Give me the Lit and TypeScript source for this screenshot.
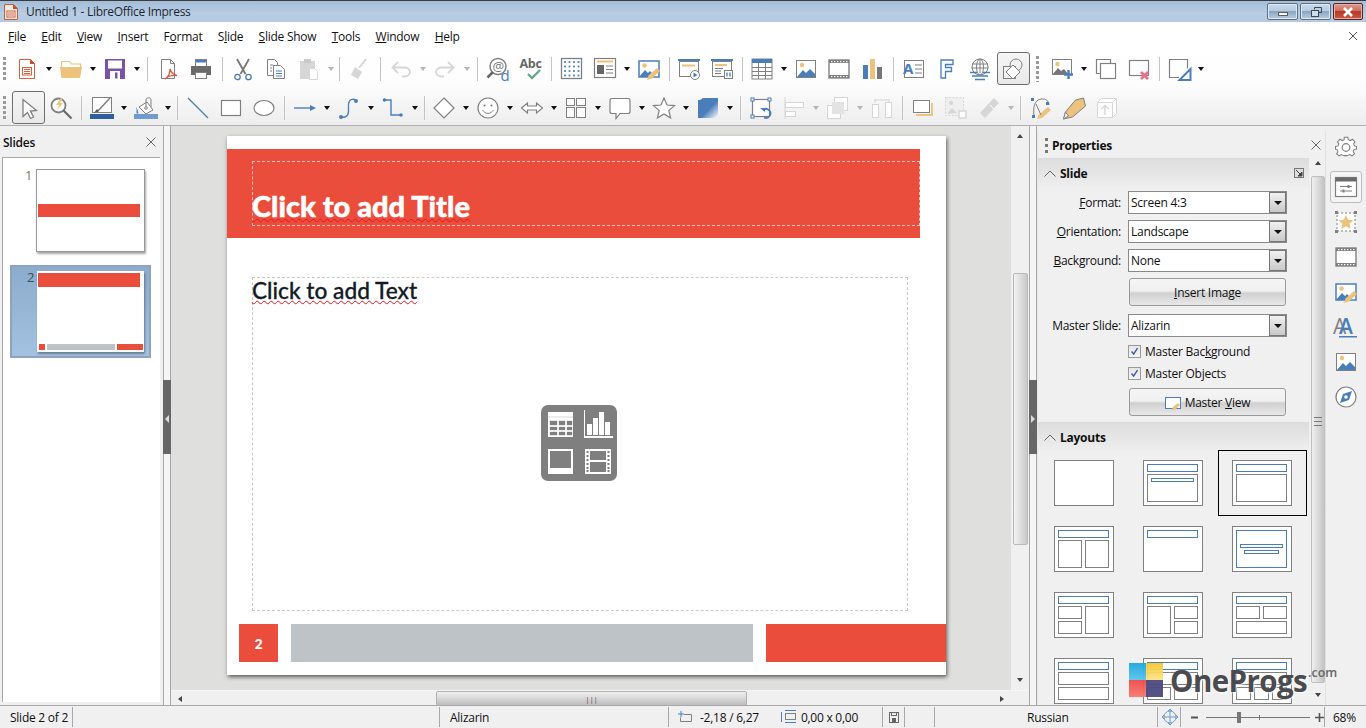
import { LitElement, html, css, svg } from "lit";
import { customElement } from "lit/decorators.js";

const G = "#808080", B = "#4a7ebb", O = "#ecc27c", D = "#d6d6d6", R = "#e0533c";

const dots = (xs: number[], ys: number[], c: string, r = 0.9) =>
  xs.flatMap((x) => ys.map((y) => svg`<rect x=${x - r} y=${y - r} width=${r * 2} height=${r * 2} fill=${c}/>`));

const imgBase = svg`<rect x="2.5" y="3.5" width="19" height="17" fill="#fff" stroke=${G}/><circle cx="8" cy="8" r="2.2" fill=${O}/><path d="M3 20l6-7 3 3 4-4 5 5v3z" fill=${B}/>`;
const movieBase = svg`<rect x="2" y="3" width="20" height="18" fill="#fff" stroke=${G} stroke-width="1.4"/><rect x="2" y="3" width="20" height="3" fill=${G}/><rect x="2" y="18" width="20" height="3" fill=${G}/>${[4, 7, 10, 13, 16, 19].flatMap((x) => [svg`<rect x=${x} y="4" width="1.4" height="1.2" fill="#fff"/>`, svg`<rect x=${x} y="19" width="1.4" height="1.2" fill="#fff"/>`])}`;
const imgEdit = svg`<rect x="2" y="4" width="20" height="16" fill="#fff" stroke=${B} stroke-width="1.5"/><circle cx="7.5" cy="8.5" r="2.2" fill=${O}/><path d="M2 20l6-7 3 3 2-2 3 3 1 3z" fill=${B}/><path d="M10 23l1.5-4.5L20 11l3 3-8 7.5z" fill=${O}/>`;

const ICONS: Record<string, unknown> = {
  new: svg`<path d="M4.5 2.5h11l4 4v15h-15z" fill="#fff" stroke="#d9603f"/><path d="M15 2l5 5h-5z" fill="#c8502f"/><rect x="7.5" y="10.5" width="9" height="7.5" fill="none" stroke="#d9603f"/><path d="M9 12.5h6M9 14.5h6M9 16.5h6" stroke="#d9603f"/>`,
  open: svg`<path d="M2.5 10V4.5h8l2 2.5h9v3" fill="none" stroke=${O} stroke-width="1.2"/><path d="M1 10h22l-2 11H2.5z" fill=${O}/>`,
  save: svg`<rect x="2" y="2" width="20" height="20" fill="#7b52a8"/><rect x="5" y="3.5" width="14" height="8" fill="#fff"/><rect x="7" y="14" width="10" height="8" fill="#fff"/><rect x="12" y="15.5" width="2.5" height="6" fill="#7b52a8"/>`,
  pdf: svg`<path d="M5.5 2.5h9l4 4v15h-13z" fill="#fff" stroke=${G}/><path d="M14.5 2.5v4h4" fill="none" stroke=${G}/><path d="M14 12c0 4-2 8-5 10 3-3 7-4 12-3.500-3-1-6-3-7-6.500z" fill="none" stroke=${R} stroke-width="1.3"/>`,
  print: svg`<rect x="6.500" y="2.500" width="11" height="7" fill="#fff" stroke=${G}/><rect x="7" y="3" width="10" height="2.500" fill=${B}/><path d="M2 9h20v9h-4v-3H6v3H2z" fill="#6a6a6a"/><rect x="6.500" y="15.500" width="11" height="6" fill="#fff" stroke=${G}/>`,
  cut: svg`<path d="M6 2l8.500 15M18 2L9.500 17" stroke="#777" stroke-width="1.8" fill="none"/><circle cx="6.500" cy="20" r="2.700" fill="#fff" stroke=${B} stroke-width="1.300"/><circle cx="17.500" cy="20" r="2.700" fill="#fff" stroke=${B} stroke-width="1.300"/>`,
  copy: svg`<path d="M3.500 2.500h7l3 3v13h-10z" fill="#fff" stroke=${G}/><path d="M9.500 8.500h7l4 4v9h-11z" fill="#fff" stroke=${G}/><path d="M6 8h3M6 11h2M6 14h2" stroke=${G}/><path d="M12 14h6M12 16.500h6M12 19h6" stroke=${B}/>`,
  paste: svg`<rect x="3" y="4" width="15" height="18" fill=${D}/><rect x="7" y="2" width="7" height="4" fill="#c8c8c8"/><path d="M12.500 11.500h5l3 3v8h-8z" fill="#fff" stroke=${D}/>`,
  clear: svg`<path d="M19 2l-7 9" stroke=${D} stroke-width="2"/><path d="M8 10l7 5-4 7-7-4z" fill=${D}/>`,
  undo: svg`<path d="M9 5L3.500 10.500 9 16M4 10.500h11c3.500 0 6 2 6 4.500s-2.500 4.500-6 4.500h-2" fill="none" stroke=${D} stroke-width="1.800"/>`,
  redo: svg`<path d="M15 5l5.500 5.500L15 16M20 10.500H9c-3.500 0-6 2-6 4.500s2.500 4.500 6 4.500h2" fill="none" stroke=${D} stroke-width="1.800"/>`,
  find: svg`<circle cx="12" cy="9.500" r="8" fill="#fff" stroke=${G} stroke-width="1.500"/><path d="M7 15l-5.500 5.500" stroke="#666" stroke-width="2.500"/><text x="6.500" y="14" font-size="13" font-family="Open Sans" fill="#777">@</text><text x="14.500" y="24" font-size="15" font-family="Open Sans" fill=${B}>d</text>`,
  spell: svg`<text x="0.500" y="11" font-size="12.500" font-weight="700" font-family="Open Sans" fill="#666">Abc</text><path d="M9 17l4 4 8-8" fill="none" stroke="#6aa590" stroke-width="2.400"/>`,
  grid: svg`<rect x="1.500" y="1.500" width="20" height="20" fill="#fff" stroke=${G} stroke-width="1.300"/>${dots([5, 9.500, 14, 18.500], [5, 9.500, 14, 18.500], B)}`,
  master: svg`<rect x="1.500" y="1.500" width="21" height="19" fill="#fff" stroke=${G} stroke-width="1.200"/><rect x="4" y="3.500" width="16" height="2" fill=${O}/><rect x="4" y="8" width="7" height="9" fill="#666"/><path d="M13 9h7M13 12.500h7M13 16h7" stroke=${G}/>`,
  imgedit: imgEdit,
  start: svg`<rect x="1" y="2" width="22" height="2" fill=${B}/><rect x="2.500" y="4.500" width="19" height="15" fill="#fff" stroke=${G}/><rect x="5" y="7.500" width="13" height="2" fill=${O}/><circle cx="18" cy="18" r="4.500" fill="#fff" stroke=${G}/><path d="M16.500 15.500l4 2.500-4 2.500z" fill=${B}/>`,
  startcur: svg`<rect x="1" y="2" width="22" height="2" fill=${B}/><rect x="2.500" y="4.500" width="19" height="15" fill="#fff" stroke=${G}/><rect x="5" y="7" width="12" height="2" fill=${O}/><path d="M5 11.500h8M5 14h6M5 16.500h6" stroke=${G}/><rect x="14.500" y="13.500" width="8" height="8" fill="#fff" stroke=${G}/><path d="M17 15.500v4M20 15.500v4" stroke=${B} stroke-width="1.300"/>`,
  table: svg`<rect x="2" y="2" width="20" height="20" fill="#fff" stroke=${G}/><rect x="2" y="2" width="20" height="4" fill=${B}/><path d="M2 10.500h20M2 14.500h20M2 18.500h20M8.500 6v16M15.500 6v16" stroke=${G}/>`,
  image: imgBase,
  movie: movieBase,
  chart: svg`<rect x="3" y="8" width="5" height="14" fill=${B}/><rect x="10" y="2" width="5" height="20" fill=${O}/><rect x="17" y="10" width="5" height="12" fill="#777"/>`,
  textbox: svg`<rect x="2.500" y="3.500" width="19" height="17" fill="#fff" stroke=${G}/><text x="1" y="17" font-size="15" font-weight="700" font-family="Open Sans" fill=${B}>A</text><path d="M13 8h7M13 12h7M13 16h7" stroke=${G}/>`,
  fontwork: svg`<path d="M6 3h12v4.500h-7.500v3h6v4h-6V21H6z" fill="#fff" stroke=${B} stroke-width="1.300"/>`,
  link: svg`<circle cx="12" cy="10" r="8" fill="#fff" stroke=${G}/><ellipse cx="12" cy="10" rx="3.500" ry="8" fill="none" stroke=${G}/><path d="M4 7h16M3.500 11h17M12 2v14" stroke=${G}/><path d="M2 15.500h7M15 15.500h7M4 19h16M7 22.500h10" stroke=${B} stroke-width="1.500"/>`,
  points: svg`<rect x="2.500" y="9.500" width="12" height="12" fill="#f2f2f2" stroke=${G}/><circle cx="15" cy="8" r="6" fill="none" stroke=${G}/><path d="M12 8l7 7-7 7-7-7z" fill="#fff" stroke=${G}/>`,
  newslide: svg`<rect x="2.500" y="2.500" width="19" height="15" fill="#fff" stroke=${G}/><circle cx="7.500" cy="7" r="2.200" fill=${O}/><path d="M3 17l5-6 3 3 3-2 4 5z" fill="#777"/><path d="M14 17.500h9M18.500 13v9" stroke=${B} stroke-width="2.400"/>`,
  dup: svg`<path d="M6.500 16.500h-4v-14h14v4" fill="none" stroke=${G} stroke-width="1.200"/><rect x="6.500" y="6.500" width="15" height="15" fill="#fff" stroke=${G} stroke-width="1.200"/>`,
  del: svg`<rect x="2.500" y="3.500" width="19" height="15" fill="#fff" stroke=${G} stroke-width="1.200"/><path d="M14 15l7 7M21 15l-7 7" stroke="#e8718a" stroke-width="2.800"/>`,
  layout: svg`<path d="M12 20.500H2.500v-18h18v9" fill="#fff" stroke=${G} stroke-width="1.200"/><path d="M23.500 12v11h-11z" fill="#fff" stroke=${B} stroke-width="2"/>`,
  select: svg`<path d="M7 3.500v17l4.500-4 3 6 3-1.500-3-6 6-.5z" fill="#fff" stroke=${G} stroke-width="1.300"/>`,
  zoom: svg`<circle cx="9.500" cy="9.500" r="7" fill="#fff" stroke=${G} stroke-width="1.800"/><path d="M14.500 14.500l8 8" stroke="#666" stroke-width="2.200"/><path d="M12 2L7 9h3l-2 5 6-7h-3l3-5z" fill=${O}/>`,
  linecolor: svg`<rect x="2.500" y="1.500" width="19" height="15" fill="#fff" stroke=${G}/><path d="M20 2L7 16" stroke=${G} stroke-width="1.500"/><path d="M4 17l3-4 2 2z" fill="#555"/><rect x="0" y="18" width="24" height="5" fill="#2f5f9f"/>`,
  fill: svg`<path d="M5 11l8-5 6 8-7 4z" fill="#fff" stroke=${G}/><circle cx="12" cy="12" r="1.300" fill="none" stroke=${G}/><path d="M12 11V4c0-3 5-3 5 0v7" fill="none" stroke=${G}/><path d="M2.500 10.500l2 7h-2z" fill=${B}/><rect x="0" y="18" width="24" height="5" fill="#6f9bd1"/>`,
  line: svg`<path d="M2 2l20 20" stroke=${B} stroke-width="1.200"/>`,
  rect: svg`<rect x="2.500" y="4.500" width="19" height="15" fill="#fff" stroke=${G} stroke-width="1.200"/>`,
  ellipse: svg`<ellipse cx="12" cy="12" rx="10" ry="7.500" fill="#fff" stroke=${G} stroke-width="1.200"/>`,
  arrowline: svg`<path d="M1 12h18" stroke=${B} stroke-width="1.400"/><path d="M17 9l6 3-6 3z" fill=${B}/>`,
  curve: svg`<path d="M4 21c3 .5 6 0 7-3 1.500-4-.5-8 1-12 1-3 4.500-3.500 7-1.500" fill="none" stroke=${B} stroke-width="1.400"/><circle cx="19" cy="5" r="2" fill=${B}/><circle cx="4" cy="21" r="2" fill=${B}/>`,
  connector: svg`<path d="M4 4h6v15h10" fill="none" stroke=${B} stroke-width="1.400"/><circle cx="3.500" cy="4" r="1.800" fill=${B}/><circle cx="20" cy="19" r="1.800" fill=${B}/>`,
  diamond: svg`<path d="M12 2l10 10-10 10L2 12z" fill="#fff" stroke=${G} stroke-width="1.200"/>`,
  smile: svg`<circle cx="12" cy="12" r="10" fill="#fff" stroke=${G} stroke-width="1.200"/><circle cx="8.500" cy="9.500" r="1.100" fill=${G}/><circle cx="15.500" cy="9.500" r="1.100" fill=${G}/><path d="M6.500 14c3 4.500 8 4.500 11 0" fill="none" stroke=${G}/>`,
  dbl: svg`<path d="M1.500 12l6-5v3h9V7l6 5-6 5v-3h-9v3z" fill="#fff" stroke=${G} stroke-width="1.100"/>`,
  flow: svg`<rect x="2.500" y="2.500" width="8" height="7" fill="#fff" stroke=${G}/><rect x="12.500" y="2.500" width="9" height="7" fill="#fff" stroke=${G}/><rect x="2.500" y="11.500" width="8" height="10" fill="#fff" stroke=${G}/><rect x="12.500" y="11.500" width="9" height="10" fill="#fff" stroke=${G}/>`,
  callout: svg`<path d="M4 2.500h16q2 0 2 2v11q0 2-2 2H12l-4 5v-5H4q-2 0-2-2v-11q0-2 2-2z" fill="#fff" stroke=${G} stroke-width="1.200"/>`,
  star: svg`<path d="M12 2l3 7 7.500.6-5.700 5 1.800 7.400L12 18l-6.600 4 1.800-7.400-5.700-5L9 9z" fill="#fff" stroke=${G} stroke-width="1.200"/>`,
  cube: svg`<defs><linearGradient id="cb" x1="0" y1="0" x2="1" y2="1"><stop offset=".55" stop-color=${B}/><stop offset="1" stop-color="#fff"/></linearGradient></defs><path d="M4 4l3-2h15v17l-3 3H2V4z" fill="url(#cb)"/>`,
  rotate: svg`<rect x="3.500" y="3.500" width="17" height="17" fill="#fff" stroke=${G} stroke-width="1.200"/><rect x="2" y="2" width="3" height="3" fill="#fff" stroke=${B}/><rect x="19" y="2" width="3" height="3" fill="#fff" stroke=${B}/><rect x="2" y="19" width="3" height="3" fill="#fff" stroke=${B}/><path d="M14 14a4.500 4.500 0 1 1 1 7.500" fill="none" stroke=${B} stroke-width="1.700"/><path d="M11 12h5v4z" fill=${B}/>`,
  align: svg`<path d="M3 1v22" stroke=${D}/><rect x="3.500" y="6.500" width="18" height="5" fill="#fff" stroke=${D}/><rect x="3.500" y="15.500" width="10" height="5" fill="#fff" stroke=${D}/>`,
  arrange: svg`<rect x="8.500" y="1.500" width="13" height="13" fill="#fff" stroke=${D}/><rect x="1.500" y="9.500" width="13" height="13" fill="#fff" stroke=${D}/><rect x="6" y="6" width="12" height="12" fill="#e3e3e3"/>`,
  distribute: svg`<rect x="2.500" y="8.500" width="6" height="13" fill="#fff" stroke=${D}/><rect x="15.500" y="6.500" width="6" height="15" fill="#fff" stroke=${D}/><path d="M5 3v4M19 3v3M5 4h14" stroke=${D}/>`,
  shadow: svg`<rect x="2.500" y="4.500" width="16" height="12" fill="#fff" stroke=${G}/><path d="M21 7v12H5" fill="none" stroke=${O} stroke-width="1.800"/>`,
  crop: svg`<rect x="1.500" y="1.500" width="18" height="18" fill="#efefef" stroke=${D} stroke-dasharray="2 1.500"/><circle cx="7" cy="7" r="2" fill=${D}/><path d="M3 18l5-6 5 5z" fill=${D}/><rect x="15" y="15" width="7" height="7" fill="#fff" stroke=${D} stroke-width="1.500"/>`,
  filter: svg`<path d="M17 2l5 5-14 15-5-5z" fill=${D}/><path d="M13 9l4 4" stroke="#fff"/>`,
  glue: svg`<path d="M5 20C4 12 5 4 12 3c5-.5 8 2 8 6" fill="none" stroke=${G}/><rect x="2" y="2" width="3" height="3" fill=${B}/><rect x="17" y="6" width="3" height="3" fill=${B}/><rect x="3" y="19" width="3" height="3" fill=${B}/><path d="M8 23l1.500-4L19 11l3 3-9 8z" fill=${O}/><path d="M7 8l5 11" stroke=${G}/>`,
  marker: svg`<path d="M1.500 23l2-7 10-12 8-2 2 8-13 11z" fill=${O} stroke=${G}/><path d="M1.500 23l5-3-3-4z" fill="#fff" stroke=${G}/>`,
  extrude: svg`<path d="M2.500 6.500h15v15h-15z M2.500 6.500l4-4h15v15l-4 4M17.500 6.500l4-4" fill="#fff" stroke=${D}/><path d="M10 19v-9M6.500 13L10 9.500l3.500 3.500" fill="none" stroke=${D} stroke-width="1.400"/>`,
  gear: svg`<path d="M10 2h4l.6 2.800 2.300 1 2.500-1.500 2.800 2.800-1.500 2.500 1 2.300L24 12.500v3l-2.800.6-1 2.300 1.500 2.500-2.800 2.300-2.500-1.500-2.300 1-.6 .300h-4l-.6-.300-2.300-1-2.500 1.500-2.800-2.300 1.500-2.500-1-2.300L0 15.500v-3l2.800-.6 1-2.300-1.500-2.500 2.800-2.800 2.500 1.500 2.300-1z" transform="translate(1.500 .5) scale(.875)" fill="#fff" stroke=${G} stroke-width="1.200"/><circle cx="12" cy="12.500" r="3.800" fill="none" stroke=${G} stroke-width="1.200"/>`,
  props: svg`<rect x="1.500" y="2.500" width="21" height="19" fill="#fff" stroke=${G} stroke-width="1.200"/><rect x="1.500" y="2.500" width="21" height="4" fill="#6a6a6a"/><path d="M6 11.500h12M6 16h12" stroke=${G}/><rect x="13.500" y="10" width="2" height="3" fill=${G}/><rect x="8.500" y="14.500" width="2" height="3" fill=${G}/>`,
  starbox: svg`<rect x="3" y="3" width="18" height="18" fill="#fff" stroke=${G} stroke-dasharray="2 2"/>${dots([2.500, 21.500], [2.500, 21.500], G, 1.500)}<path d="M12 5l2.200 4.800 5.300.5-4 3.500 1.200 5.200-4.700-2.800-4.700 2.800 1.200-5.200-4-3.500 5.300-.5z" fill=${O}/>`,
  styles: svg`<text x="-1" y="19" font-size="21" font-family="Open Sans" fill=${G}>A</text><text x="5" y="19" font-size="21" font-weight="600" font-family="Open Sans" fill=${B}>A</text><rect x="5" y="21" width="18" height="1.500" fill=${B}/>`,
  compass: svg`<circle cx="12" cy="12" r="10" fill="#fff" stroke=${G} stroke-width="1.200"/><path d="M18 6l-3 9-9 3 3-9z" fill=${B}/><circle cx="12" cy="12" r="1.800" fill="#fff"/>`,
};

const row1 = ["new", "v", "open", "v", "save", "v", "|9", "pdf", "print", "|9", "cut", "copy", "paste-", "v-", "|6", "clear-", "|9", "undo-", "v-", "redo-", "v-", "|9", "find", "spell", "|8", "grid", "master", "v", "imgedit", "|7", "start", "startcur", "|7", "table", "v", "image", "movie", "chart", "|9", "textbox", "fontwork", "link", "points*", "grip", "newslide", "v", "dup", "del", "|7", "layout", "v"];
const row2 = ["select*", "zoom", "|8", "linecolor", "v", "fill", "v", "|8", "line", "rect", "ellipse", "|8", "arrowline", "v", "curve", "v", "connector", "v", "|7", "diamond", "v", "smile", "v", "dbl", "v", "flow", "v", "callout", "v", "star", "v", "cube", "v", "|9", "rotate", "align-", "v-", "arrange-", "v-", "distribute-", "|8", "shadow", "crop-", "filter-", "v-", "|8", "glue", "marker", "extrude-"];

const menus: [string, number][] = [["File", 0], ["Edit", 0], ["View", 0], ["Insert", 0], ["Format", 1], ["Slide", 1], ["Slide Show", 0], ["Tools", 0], ["Window", 0], ["Help", 0]];

type Box = [number, number, number, number, number?];
const layouts: Box[][] = [
  [],
  [[4, 4, 51, 7, 1], [4, 14, 51, 27], [8, 18, 43, 3, 1]],
  [[4, 4, 51, 7, 1], [4, 14, 51, 27]],
  [[4, 4, 51, 7, 1], [4, 14, 24, 27], [31, 14, 24, 27]],
  [[4, 4, 51, 7, 1]],
  [[4, 4, 51, 37, 1], [8, 18, 43, 3, 1], [12, 24, 35, 3, 1]],
  [[4, 4, 51, 7, 1], [4, 14, 24, 12], [4, 29, 24, 12], [31, 14, 24, 27]],
  [[4, 4, 51, 7, 1], [4, 14, 24, 27], [31, 14, 24, 12], [31, 29, 24, 12]],
  [[4, 4, 51, 7, 1], [4, 14, 24, 12], [31, 14, 24, 12], [4, 29, 51, 12]],
  [[4, 4, 51, 7, 1], [4, 14, 51, 12], [4, 29, 51, 12]],
  [[4, 4, 51, 7, 1], [4, 14, 51, 12], [4, 29, 24, 12], [31, 29, 24, 12]],
  [[4, 4, 51, 7, 1], [4, 14, 51, 12], [4, 29, 15, 12], [22, 29, 15, 12], [40, 29, 15, 12]],
];

const thumb1 = html`<div class="thumb t1"><div class="t1band"></div></div>`;
const thumb2 = html`<div class="thumb t2"><div class="t2band"></div><div class="t2foot"><i class="tf-a"></i><i class="tf-b"></i><i class="tf-c"></i></div></div>`;

@customElement("app-root")
export class AppRoot extends LitElement {
  static styles = css`
    :host { display: block; width: 1366px; height: 728px; overflow: hidden; background: #f0f0f0; font-family: "Open Sans", "Liberation Sans", sans-serif; font-size: 12px; letter-spacing: -0.25px; color: #111; }
    * { box-sizing: border-box; }
    u { text-underline-offset: 1px; }
    .app { display: flex; flex-direction: column; height: 728px; }
    .title { height: 22px; flex: none; display: flex; align-items: center; border-top: 1px solid #3c3c3c; background: linear-gradient(#a3bdd9, #b9cde3 60%, #b4cae2); padding-left: 3px; padding-right: 1px; color: #1c2733; }
    .title svg { width: 16px; height: 18px; flex: none; }
    .title .tt { margin-left: 7px; flex: 1; letter-spacing: -0.3px; }
    .wbtn { width: 31px; height: 17px; border: 1px solid #5a7188; border-radius: 2px; margin-right: 2px; display: flex; align-items: center; justify-content: center; background: linear-gradient(#c9d9ea 0, #b7cbe0 45%, #8ba6c3 50%, #b9cde2 100%); box-shadow: inset 0 0 0 1px #dde8f3; }
    .wbtn.close { width: 30px; background: linear-gradient(#dc9b8f 0, #cf6f5e 45%, #b83a27 50%, #c85a45 100%); border-color: #5a2320; box-shadow: inset 0 0 0 1px #e3b0a8; }
    .wbtn svg { width: 14px; height: 12px; }
    .menu { height: 28px; flex: none; background: #fff; display: flex; align-items: center; padding-left: 8px; gap: 15.3px; position: relative; font-size: 12px; }
    .menu .mclose { margin-left: auto; width: 24px; height: 24px; margin-right: 1px; }
    .tools { flex: none; height: 75px; background: linear-gradient(#fff, #fdfdfd 45%, #ededed); display: flex; flex-direction: column; padding-top: 2px; }
    .row { height: 33px; display: flex; align-items: center; flex: none; padding-left: 3px; }
    .row + .row { margin-top: 6px; }
    .grip { width: 3px; height: 24px; flex: none; background: repeating-linear-gradient(#9a9a9a 0 3px, transparent 3px 5px); }
    .grip.first { margin-right: 4.500px; }
    .row.two .grip.first { margin-right: 5.500px; }
    .grip.mid { margin: 0 6.500px; width: 3px; height: 26px; }
    .btn { width: 33px; height: 33px; flex: none; display: flex; align-items: center; justify-content: center; border: 1px solid transparent; border-radius: 3px; }
    .btn svg { width: 24px; height: 24px; overflow: visible; }
    .btn.on { border: 1px solid #6e6e6e; background: linear-gradient(#f6f6f6, #e9e9e9); }
    .arr { width: 11px; height: 33px; flex: none; display: flex; align-items: center; justify-content: center; }
    .arr::before { content: ""; border: 3.500px solid transparent; border-top: 4px solid #111; border-bottom: 0; }
    .arr.off::before { border-top-color: #b5b5b5; }
    .sep { height: 24px; flex: none; display: flex; justify-content: center; }
    .sep::before { content: ""; width: 1px; background: #c4c4c4; }
    .s6 { width: 6px; } .s7 { width: 7px; } .s8 { width: 8px; } .s9 { width: 9px; }
    .main { flex: 1; min-height: 0; display: flex; border-top: 1px solid #b0b0b0; }
    .left { width: 163px; flex: none; display: flex; flex-direction: column; background: #f0f0f0; }
    .phead { height: 31px; flex: none; display: flex; align-items: center; padding: 1px 6px 0 3px; font-weight: 600; justify-content: space-between; }
    .x { width: 12px; height: 12px; flex: none; }
    .slides { flex: 1; margin: 0 3px 3px 2px; background: #fff; border-top: 1px solid #a8a8a8; border-left: 1px solid #a8a8a8; padding: 11px 0 0 7px; }
    .sl { width: 141px; display: flex; padding: 0 0 0 15px; color: #7f7f7f; font-size: 13px; }
    .sl .n { width: 12px; flex: none; line-height: 13px; }
    .sl.s1 .n { color: #8b7a66; }
    .sl.s1 { padding-left: 15px; margin-bottom: 13px; }
    .sl.s2 { height: 93px; padding: 4px 0 0 15px; background: linear-gradient(#8caccd, #a3c1e0); border: 2px solid #8ea4bc; color: #3d4b5a; }
    .thumb { width: 109px; height: 83px; background: #fff; border: 1px solid #999; box-shadow: 1px 2px 2px rgba(0, 0, 0, .35); display: flex; flex-direction: column; }
    .t1 { margin-left: -1px; padding: 34px 4px 0 1px; }
    .t1band { height: 13px; background: #eb4d3d; }
    .t2 { width: 107px; height: 81px; padding: 1px 0 0 0; margin-left: -2px; border-color: #fff; }
    .t2band { height: 14px; background: #eb4d3d; margin-right: 3px; }
    .t2foot { margin-top: auto; margin-bottom: 1px; height: 6px; display: flex; gap: 2px; padding-left: 1px; }
    .t2foot i { display: block; height: 6px; }
    .tf-a { width: 6px; background: #eb4d3d; }
    .tf-b { width: 68px; background: #bdc3c7; }
    .tf-c { flex: 1; background: #eb4d3d; }
    .split { width: 8px; flex: none; background: #f5f5f5; border-left: 1px solid #a8a8a8; border-right: 1px solid #a8a8a8; position: relative; }
    .handle { position: absolute; left: -1px; top: 254px; width: 8px; height: 74px; background: #666; display: flex; align-items: center; justify-content: center; }
    .handle::before { content: ""; border: 4px solid transparent; border-left: 0; border-right: 4px solid #ddd; margin-top: 4px; }
    .handle.r::before { border-right: 0; border-left: 4px solid #ddd; }
    .center { width: 858px; flex: none; display: flex; flex-direction: column; }
    .cup { height: 564px; flex: none; display: flex; }
    .canvas { flex: 1; background: #dfdfde; padding: 10px 0 0 56px; overflow: hidden; }
    .slide { width: 719px; height: 539px; background: #fff; box-shadow: 1px 2px 4px rgba(0, 0, 0, .6); padding-top: 13px; display: flex; flex-direction: column; font-family: "Lato", "Open Sans", sans-serif; letter-spacing: 0; }
    .band { height: 89px; width: 693px; flex: none; background: #eb4d3d; padding: 12px 0 0 25px; }
    .ph { border: 1px dashed rgba(255, 255, 255, .65); height: 65px; display: flex; align-items: flex-end; padding-bottom: 1px; }
    .tt1 { margin-left: -1px; color: #fff; font-size: 29px; font-weight: 900; -webkit-text-stroke: .5px #fff; line-height: 36px; text-decoration: underline wavy #e8141e 1px; text-decoration-skip-ink: none; text-underline-offset: 1px; white-space: nowrap; }
    .body { margin: 39px 0 0 25px; width: 656px; height: 334px; border: 1px dashed #c9c9c9; position: relative; display: flex; align-items: center; justify-content: center; }
    .tt2 { position: absolute; left: -1px; top: -1px; font-size: 22.7px; font-weight: 500; -webkit-text-stroke: .3px #151b24; line-height: 28px; color: #151b24; text-decoration: underline wavy #e8141e 1px; text-decoration-skip-ink: none; white-space: nowrap; }
    .obj { width: 76px; height: 76px; background: #7f7f7f; border-radius: 7px; display: block; margin: 0 2px 2px 0; }
    .foot { margin: 13px 0 0 12px; display: flex; height: 38px; flex: none; color: #fff; }
    .f1 { width: 39px; background: #eb4d3d; display: flex; align-items: center; justify-content: center; font-weight: 900; font-size: 14px; }
    .f2 { width: 462px; margin-left: 13px; background: #bdc3c7; }
    .f3 { flex: 1; margin-left: 13px; background: #eb4d3d; }
    .vscroll { width: 18px; flex: none; background: #f0f0f0; display: flex; flex-direction: column; align-items: center; }
    .vthumb { width: 15px; background: linear-gradient(90deg, #f2f2f2, #c8c8c8); border: 1px solid #b9b9b9; border-radius: 2px; }
    .hscroll { height: 16px; flex: none; background: #f0f0f0; display: flex; align-items: center; border-top: 1px solid #f7f7f7; }
    .hthumb { width: 311px; height: 15px; background: linear-gradient(#f0f0f0, #bdbdbd); border: 1px solid #b0b0b0; border-radius: 2px; display: flex; align-items: center; justify-content: center; color: #555; font-size: 8px; }
    .ua, .da, .la, .ra { width: 0; height: 0; flex: none; border: 3.500px solid transparent; }
    .ua { border-top: 0; border-bottom: 4px solid #444; }
    .da { border-bottom: 0; border-top: 4px solid #444; }
    .la { border-left: 0; border-right: 4px solid #444; }
    .ra { border-right: 0; border-left: 4px solid #444; }
    .sidebar { flex: 1; min-width: 0; display: flex; background: #f0f0f0; padding: 5px 0 0 0; }
    .deck { width: 288px; flex: none; display: flex; flex-direction: column; border-left: 1px solid #e6e6e6; min-height: 0; }
    .dhead { height: 27px; flex: none; display: flex; align-items: center; padding: 1px 0 0 7px; font-weight: 700; }
    .dgrip { width: 3px; height: 15px; background: repeating-linear-gradient(#777 0 3px, transparent 3px 6px); margin-right: 4px; }
    .dhead .x { margin-left: auto; margin-right: 3px; }
    .dbody { flex: 1; min-height: 0; display: flex; }
    .sections { width: 271px; flex: none; overflow: hidden; }
    .shead { height: 30px; display: flex; align-items: center; padding-left: 6px; font-weight: 700; background: linear-gradient(#dcdcdc, #efefef); gap: 4px; }
    .shead svg.chev { width: 12px; height: 7px; }
    .shead .more { margin-left: auto; margin-right: 5px; width: 10px; height: 10px; }
    .sbody { padding: 3px 0 7px 0; height: 234px; }
    .frow { display: flex; align-items: center; height: 23px; margin-bottom: 6px; }
    .frow label { width: 83px; text-align: right; margin-right: 0; }
    .combo { width: 159px; height: 23px; margin-left: 7px; border: 1px solid #8a8a8a; background: #fff; display: flex; align-items: center; padding-left: 2px; }
    .combo .cb { margin-left: auto; width: 17px; height: 21px; background: linear-gradient(#f0f0f0, #c9c9c9); border: 1px solid #777; display: flex; align-items: center; justify-content: center; }
    .combo .cb::before { content: ""; border: 4px solid transparent; border-top: 4px solid #111; border-bottom: 0; }
    .pbtn { margin-left: 91px; width: 157px; height: 28px; padding-top: 1px; display: flex; align-items: center; justify-content: center; gap: 4px; border: 1px solid #9a9a9a; border-radius: 3px; background: linear-gradient(#f5f5f5, #f0f0f0 45%, #d0d0d0 55%, #e8e8e8); }
    .pbtn.mv { margin-top: 7px; }
    .pbtn svg { width: 16px; height: 14px; }
    .frow.ms { margin-top: 8px; margin-bottom: 6px; }
    .check { margin-left: 90px; display: flex; align-items: center; gap: 4px; height: 16px; margin-bottom: 6px; }
    .box { width: 13px; height: 13px; border: 1px solid #9a9a9a; background: linear-gradient(#e6e6e6, #f5f5f5); display: block; }
    .grid { display: grid; grid-template-columns: repeat(3, 60px); column-gap: 29px; row-gap: 20px; padding: 8px 0 0 16px; }
    .lay { width: 60px; height: 46px; display: block; position: relative; }
    .lay svg { width: 60px; height: 46px; display: block; }
    .lay.sel::after { content: ""; position: absolute; left: -14px; right: -15px; top: -10px; bottom: -10px; border: 1px solid #000; }
    .pscroll { width: 17px; flex: none; display: flex; flex-direction: column; align-items: center; padding-top: 3px; }
    .pthumb { width: 14px; flex: 1; margin-top: 11px; margin-bottom: 10px; background: linear-gradient(90deg, #f0f0f0, #c4c4c4); border: 1px solid #c0c0c0; border-radius: 2px; display: flex; flex-direction: column; align-items: center; padding-top: 240px; }
    .pthumb i { width: 8px; height: 9px; display: block; background: repeating-linear-gradient(#777 0 1px, transparent 1px 4px); }
    .tabs { flex: 1; display: flex; flex-direction: column; align-items: center; gap: 3px; border-left: 1px solid #e2e2e2; }
    .tab { width: 32px; height: 32px; flex: none; display: flex; align-items: center; justify-content: center; border: 1px solid transparent; border-radius: 3px; }
    .tab.gear { margin-bottom: 5px; }
    .tab.on { border-color: #bdbdbd; background: #f4f4f4; }
    .tab svg { width: 24px; height: 24px; overflow: visible; }
    .status { height: 23px; flex: none; display: flex; align-items: center; border-top: 1px solid #a8a8a8; background: #f0f0f0; }
    .cell { height: 20px; flex: none; display: flex; align-items: center; border-right: 1px solid #a8a8a8; padding-left: 10px; white-space: nowrap; }
    .cell svg { flex: none; }
    .c1 { width: 73px; } .c2 { width: 367px; } .c3 { width: 229px; }
    .c4 { width: 214px; padding-left: 8px; }
    .c4 .pv { margin-left: 7px; }
    .c4 .si { margin-left: 22px; }
    .c4 .sv { margin-left: 4px; }
    .c5 { width: 22px; padding-left: 5px; } .c6 { width: 30px; }
    .c7 { width: 223px; padding-left: 92px; }
    .c8 { width: 23px; padding-left: 3px; }
    .c9 { width: 36px; border-right: 0; padding-left: 8px; }
    .zbar { width: 144px; display: flex; align-items: center; padding-left: 9px; gap: 0; }
    .ztrack { width: 105px; height: 1px; background: #777; margin: 0 5px 0 7px; position: relative; display: block; }
    .ztrack::before { content: ""; position: absolute; left: 31px; top: -5px; width: 4px; height: 11px; background: #777; }
    .ztrack::after { content: ""; position: absolute; left: 53px; top: -2px; width: 1px; height: 5px; background: #777; }
    .wm { position: absolute; left: 1129px; top: 660px; display: flex; align-items: flex-start; pointer-events: none; }
    .wmgrid { display: grid; grid-template-columns: 17px 17px; grid-template-rows: 17px 17px; width: 34px; height: 34px; margin-top: 3px; opacity: .95; }
    .wmgrid i { display: block; }
    .q1 { background: linear-gradient(#1aa7e0, #5cc4ec); }
    .q2 { background: linear-gradient(#f7c72b, #fde58a); }
    .q3 { background: linear-gradient(#f04a4a, #fa7a70); }
    .q4 { background: #4c4a80; }
    .wmtext { font-family: "Open Sans", sans-serif; font-size: 29.5px; font-weight: 700; letter-spacing: -0.6px; line-height: 42px; color: #4a4a4f; margin-left: 7px; text-shadow: 1px 1px 2px rgba(255, 255, 255, .9); }
    .wmcom { font-family: "Open Sans", sans-serif; font-size: 12.5px; font-weight: 600; letter-spacing: 0; color: #666; margin: 4px 0 0 1px; }
    .vu { margin-top: 8px; } .vd { margin-top: auto; margin-bottom: 8px; }
    .vthumb { margin-top: 135px; height: 272px; }
    .la { margin-left: 7px; } .hthumb { margin-left: 254px; }
    .ra { margin-left: auto; margin-right: 25px; }
    .pda { margin-bottom: 8px; }
  `;

  private icon(n: string) {
    return html`<svg viewBox="0 0 24 24">${ICONS[n]}</svg>`;
  }

  private tool(t: string, i: number) {
    if (t[0] === "|") return html`<span class="sep s${t[1]}"></span>`;
    if (t === "v") return html`<span class="arr"></span>`;
    if (t === "v-") return html`<span class="arr off"></span>`;
    if (t === "grip") return html`<span class="grip mid"></span>`;
    const on = t.endsWith("*");
    const name = t.replace(/[*-]$/, "");
    return html`<span class="btn ${on ? "on" : ""}" data-i=${i}>${this.icon(name)}</span>`;
  }

  private x() {
    return html`<svg class="x" viewBox="0 0 12 12"><path d="M1.500 1.500l9 9M10.500 1.500l-9 9" stroke="#666" fill="none"/></svg>`;
  }

  private frow(label: unknown, value: string, cls = "") {
    return html`<div class="frow ${cls}"><label>${label}</label><div class="combo">${value}<span class="cb"></span></div></div>`;
  }

  private check(label: unknown) {
    return html`<div class="check"><svg class="box" viewBox="0 0 13 13"><path d="M3 6.500l2.500 3L10 2.500" fill="none" stroke="#3f5a9a" stroke-width="1.700"/></svg><span>${label}</span></div>`;
  }

  private chev() {
    return html`<svg class="chev" viewBox="0 0 12 7"><path d="M.5 6.500L6 1l5.500 5.500" fill="none" stroke="#666"/></svg>`;
  }

  private layout(boxes: Box[], sel: boolean) {
    return html`<span class="lay ${sel ? "sel" : ""}"><svg viewBox="0 0 60 46"><rect x=".5" y=".5" width="59" height="45" fill="#fff" stroke="#808080"/>${boxes.map(([x, y, w, h, b]) => svg`<rect x=${x + 0.5} y=${y + 0.5} width=${w - 1} height=${h} fill="none" stroke=${b ? "#4a7ebb" : "#808080"}/>`)}</svg></span>`;
  }

  render() {
    return html`<div class="app">
      <div class="title">
        <svg viewBox="0 0 16 18"><path d="M1.500 1.500h9l4 4v11h-13z" fill="#f4e9e2" stroke="#c8603a"/><path d="M10 1l5 5h-5z" fill="#c8502f"/><rect x="4" y="8" width="8" height="6" fill="#fff" stroke="#c8603a"/><path d="M5 10h6M5 12h6" stroke="#c8603a"/></svg>
        <span class="tt">Untitled 1 - LibreOffice Impress</span>
        <span class="wbtn"><svg viewBox="0 0 14 12"><rect x="2.500" y="6.500" width="9" height="3" fill="#fff" stroke="#56616e"/></svg></span>
        <span class="wbtn"><svg viewBox="0 0 14 12"><path d="M5.500 3.500v-2h7v5h-3" fill="none" stroke="#3d4954"/><rect x="2.500" y="4.500" width="7" height="6" fill="#cfdcea" stroke="#3d4954"/></svg></span>
        <span class="wbtn close"><svg viewBox="0 0 14 12"><path d="M3 2l8 8M11 2l-8 8" stroke="#fff" stroke-width="2.600"/></svg></span>
      </div>
      <div class="menu">
        ${menus.map(([m, i]) => html`<span>${m.slice(0, i)}<u>${m[i]}</u>${m.slice(i + 1)}</span>`)}
        <svg class="mclose" viewBox="0 0 24 24"><path d="M8 8l8 8M16 8l-8 8" stroke="#555" fill="none"/></svg>
      </div>
      <div class="tools">
        <div class="row"><span class="grip first"></span>${row1.map((t, i) => this.tool(t, i))}</div>
        <div class="row two"><span class="grip first"></span>${row2.map((t, i) => this.tool(t, i))}</div>
      </div>
      <div class="main">
        <div class="left">
          <div class="phead"><span>Slides</span>${this.x()}</div>
          <div class="slides">
            <div class="sl s1"><span class="n">1</span>${thumb1}</div>
            <div class="sl s2"><span class="n">2</span>${thumb2}</div>
          </div>
        </div>
        <div class="split"><div class="handle"></div></div>
        <div class="center">
          <div class="cup">
            <div class="canvas">
              <div class="slide">
                <div class="band"><div class="ph"><span class="tt1">Click to add Title</span></div></div>
                <div class="body">
                  <span class="tt2">Click to add Text</span>
                  <svg class="obj" viewBox="0 0 76 76">
                    <path d="M7 7h25v25H7z" fill="#fff"/><path d="M7 12h25M9 16h7v4H9zM18 16h6v4h-6zM26 16h5v4h-5zM9 22h7v3H9zM18 22h6v3h-6zM26 22h5v3h-5zM9 27h7v3H9zM18 27h6v3h-6zM26 27h5v3h-5z" fill="#7f7f7f" stroke="#7f7f7f" stroke-width=".3"/>
                    <path d="M44 5v26h28v2H43V5z" fill="#fff"/><rect x="46" y="19" width="5" height="11" fill="#fff"/><rect x="52" y="13" width="5" height="17" fill="#fff"/><rect x="58" y="7" width="5" height="23" fill="#fff"/><rect x="64" y="17" width="5" height="13" fill="#fff"/>
                    <rect x="7" y="44" width="25" height="25" fill="#fff"/><rect x="9" y="46" width="21" height="17" fill="#7f7f7f"/>
                    <rect x="44" y="44" width="26" height="25" fill="#fff"/><rect x="49" y="46" width="16" height="9" fill="#7f7f7f"/><rect x="49" y="57" width="16" height="10" fill="#7f7f7f"/>
                    ${[46, 50, 54, 58, 62, 65].map((y) => svg`<rect x="45.500" y=${y} width="2" height="2" fill="#7f7f7f"/><rect x="66.500" y=${y} width="2" height="2" fill="#7f7f7f"/>`)}
                  </svg>
                </div>
                <div class="foot"><div class="f1">2</div><div class="f2"></div><div class="f3"></div></div>
              </div>
            </div>
            <div class="vscroll">
              <span class="ua vu"></span>
              <div class="vthumb"></div>
              <span class="da vd"></span>
            </div>
          </div>
          <div class="hscroll">
            <span class="la"></span>
            <div class="hthumb">|||</div>
            <span class="ra"></span>
          </div>
        </div>
        <div class="split"><div class="handle r"></div></div>
        <div class="sidebar">
          <div class="deck">
            <div class="dhead"><span class="dgrip"></span><span>Properties</span>${this.x()}</div>
            <div class="dbody">
              <div class="sections">
                <div class="shead">${this.chev()}<span>Slide</span><svg class="more" viewBox="0 0 10 10"><rect x=".5" y=".5" width="9" height="9" fill="#ddd" stroke="#777"/><path d="M2 2l6 6M8 4v4H4z" fill="#444" stroke="#444"/></svg></div>
                <div class="sbody">
                  ${this.frow(html`<u>F</u>ormat:`, "Screen 4:3")}
                  ${this.frow(html`<u>O</u>rientation:`, "Landscape")}
                  ${this.frow(html`<u>B</u>ackground:`, "None")}
                  <div class="pbtn"><span><u>I</u>nsert Image</span></div>
                  ${this.frow("Master Slide:", "Alizarin", "ms")}
                  ${this.check(html`Master Bac<u>k</u>ground`)}
                  ${this.check(html`Master Ob<u>j</u>ects`)}
                  <div class="pbtn mv"><svg viewBox="0 0 16 14"><rect x=".5" y="1.500" width="15" height="11" fill="#fff" stroke="#4a7ebb"/><path d="M7 14l1-3 5-4 2 2-5 5z" fill="#ecc27c"/></svg><span>Master <u>V</u>iew</span></div>
                </div>
                <div class="shead">${this.chev()}<span>Layouts</span></div>
                <div class="grid">${layouts.map((b, i) => this.layout(b, i === 2))}</div>
              </div>
              <div class="pscroll">
                <span class="ua"></span>
                <div class="pthumb"><i></i></div>
                <span class="da pda"></span>
              </div>
            </div>
          </div>
          <div class="tabs">
            <span class="tab gear">${this.icon("gear")}</span>
            <span class="tab on">${this.icon("props")}</span>
            <span class="tab">${this.icon("starbox")}</span>
            <span class="tab">${this.icon("movie")}</span>
            <span class="tab">${this.icon("imgedit")}</span>
            <span class="tab">${this.icon("styles")}</span>
            <span class="tab">${this.icon("image")}</span>
            <span class="tab">${this.icon("compass")}</span>
          </div>
        </div>
      </div>
      <div class="status">
        <div class="cell c1">Slide 2 of 2</div>
        <div class="cell c2"></div>
        <div class="cell c3">Alizarin</div>
        <div class="cell c4">
          <svg width="16" height="14" viewBox="0 0 16 14"><path d="M4 1v6M1 4h6" stroke="#4a7ebb"/><path d="M7 4.500h7.500v7h-11v-4" fill="none" stroke="#808080"/></svg>
          <span class="pv">-2,18 / 6,27</span>
          <svg class="si" width="16" height="14" viewBox="0 0 16 14"><path d="M.5 2v10M4 .5h11M4 12.500h11" stroke="#4a7ebb"/><rect x="4.500" y="3.500" width="10" height="6" fill="none" stroke="#808080"/></svg>
          <span class="sv">0,00 x 0,00</span>
        </div>
        <div class="cell c5"><svg width="12" height="13" viewBox="0 0 12 13"><rect x="1.500" y="1.500" width="9" height="10" fill="none" stroke="#666"/><rect x="3.500" y="1.500" width="5" height="3" fill="none" stroke="#666"/><rect x="4" y="7" width="4" height="4" fill="#666"/></svg></div>
        <div class="cell c6"></div>
        <div class="cell c7">Russian</div>
        <div class="cell c8"><svg width="18" height="18" viewBox="0 0 18 18"><circle cx="9" cy="9" r="6" fill="none" stroke="#6f9bd1"/><path d="M9 1v16M1 9h16M7 3l2-2 2 2M7 15l2 2 2-2M3 7L1 9l2 2M15 7l2 2-2 2" fill="none" stroke="#6f9bd1"/></svg></div>
        <div class="cell zbar"><svg width="9" height="9" viewBox="0 0 9 9"><path d="M1 4.500h7" stroke="#555" stroke-width="2"/></svg><span class="ztrack"></span><svg width="9" height="9" viewBox="0 0 9 9"><path d="M0 4.500h9M4.500 0v9" stroke="#555" stroke-width="1.600"/></svg></div>
        <div class="cell c9">68%</div>
      </div>
      <div class="wm">
        <div class="wmgrid"><i class="q1"></i><i class="q2"></i><i class="q3"></i><i class="q4"></i></div>
        <span class="wmtext">OneProgs</span><span class="wmcom">.com</span>
      </div>
    </div>`;
  }
}
